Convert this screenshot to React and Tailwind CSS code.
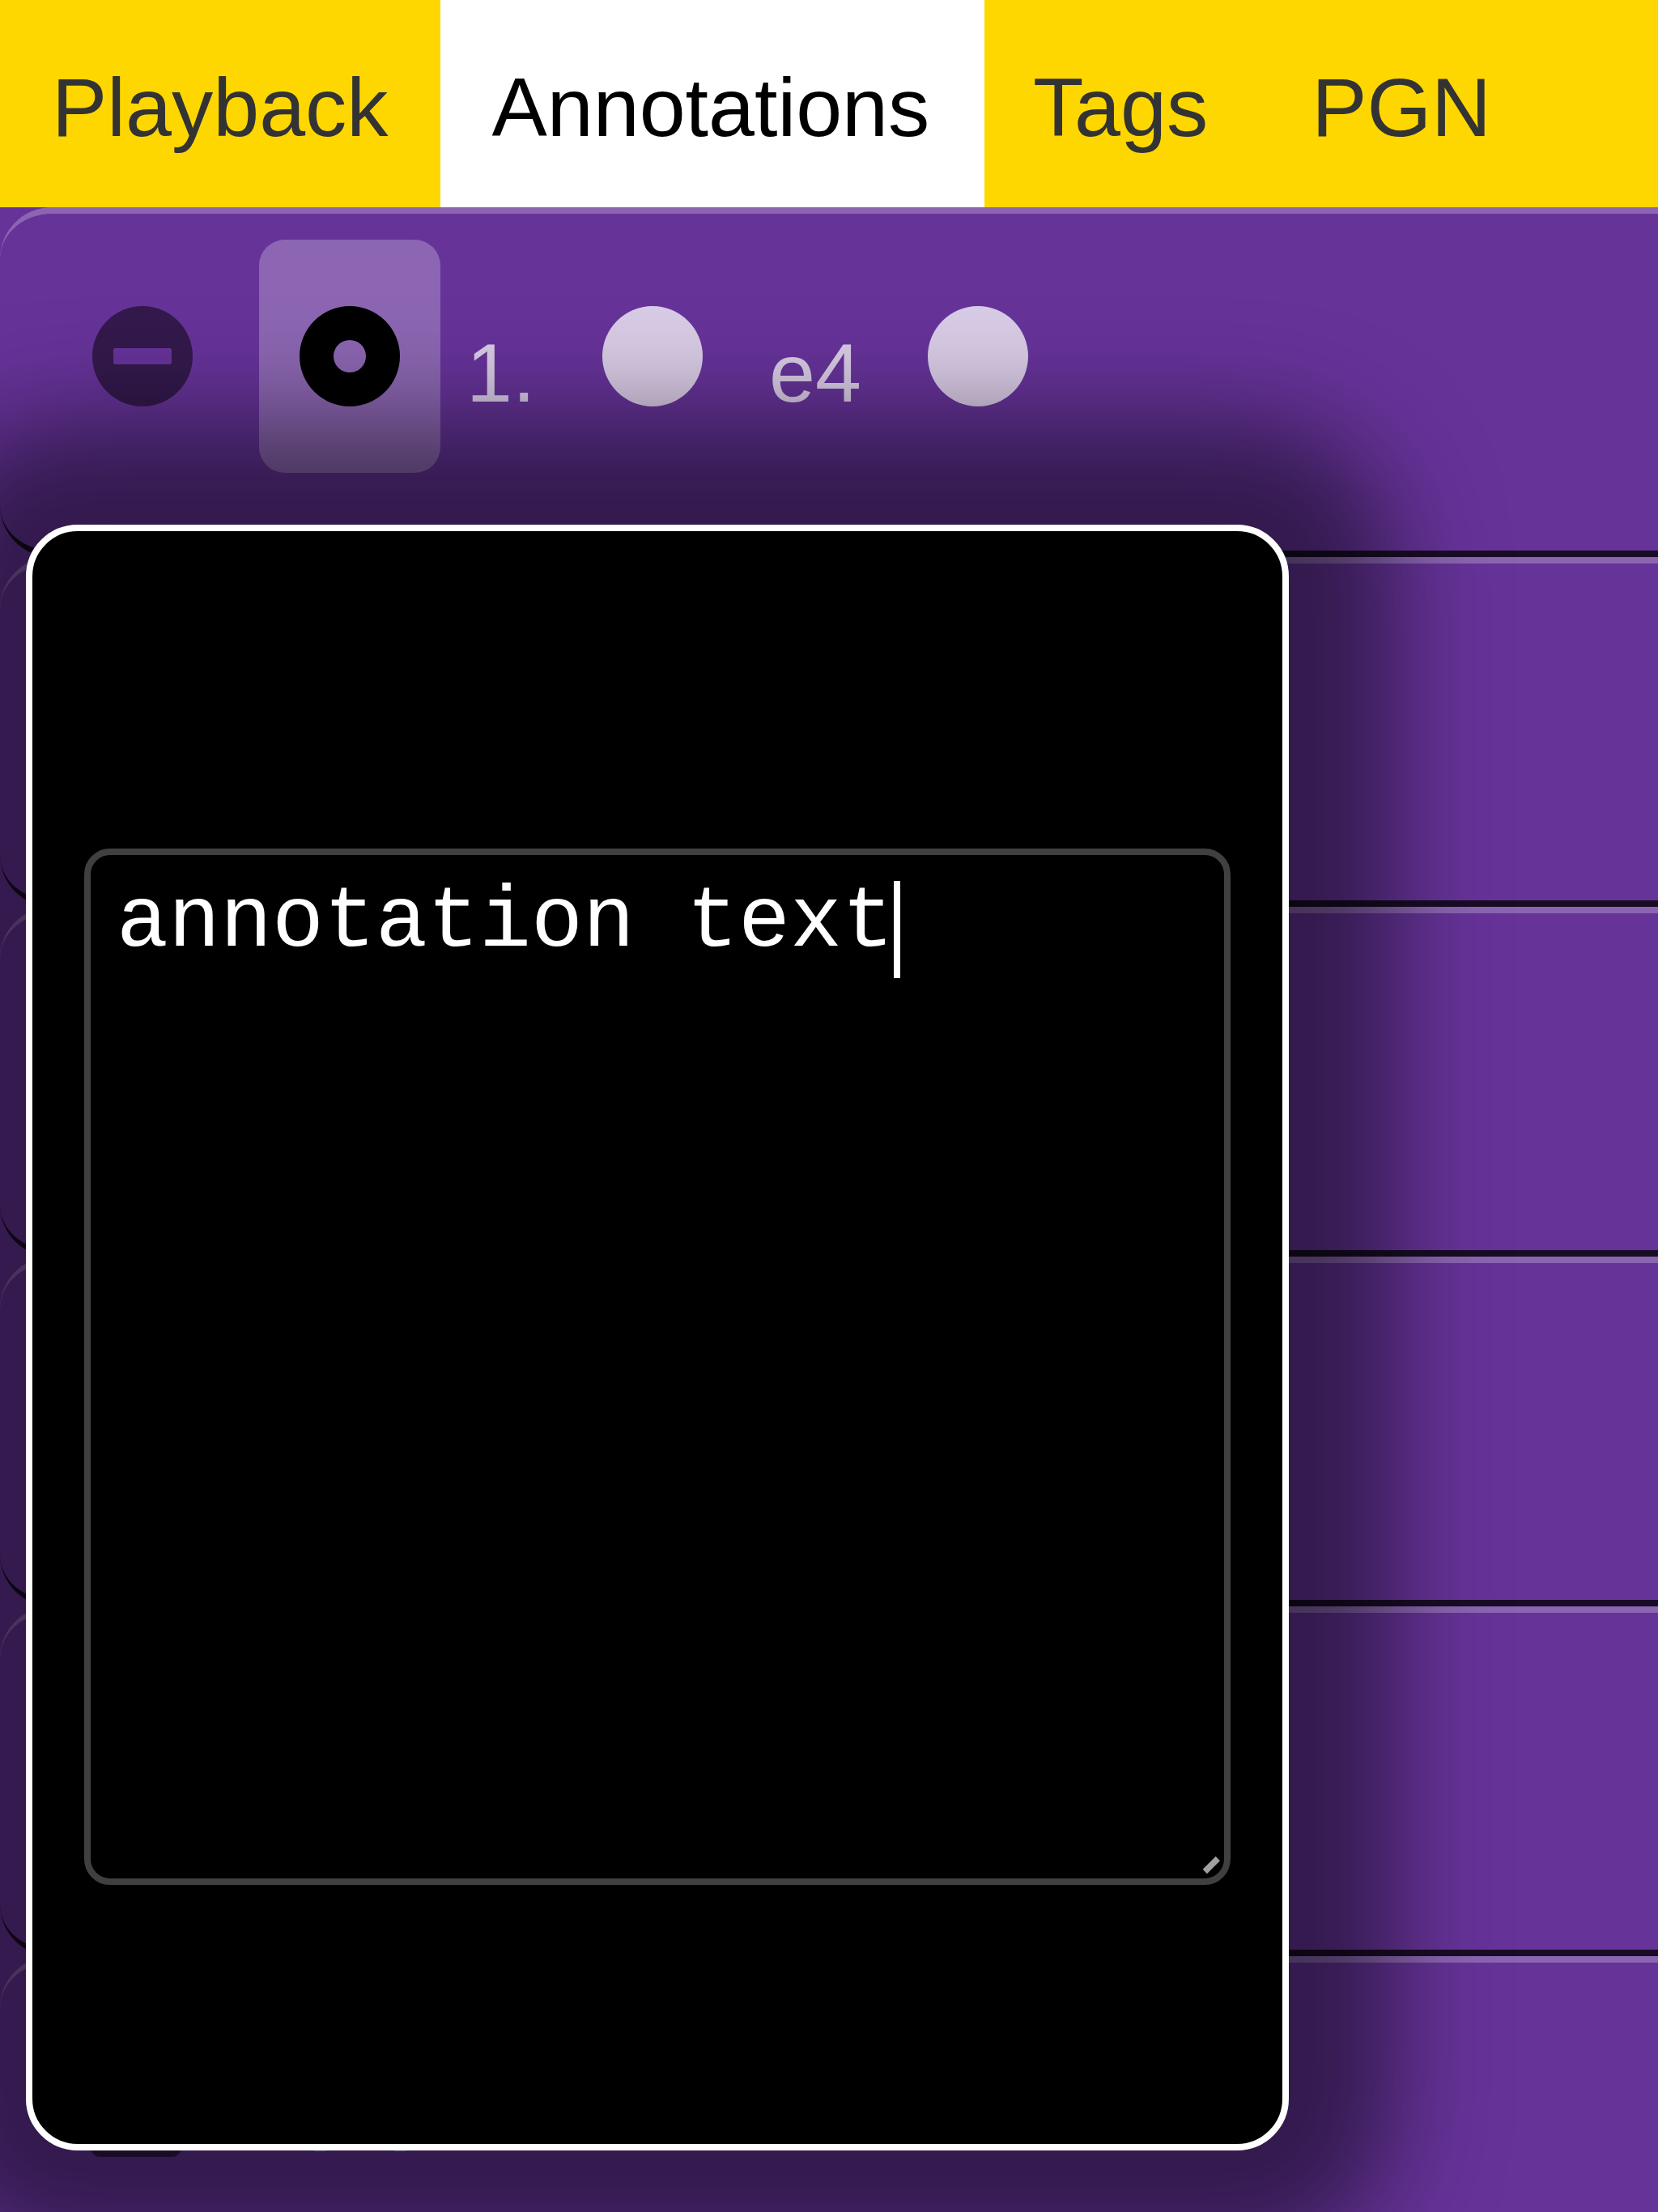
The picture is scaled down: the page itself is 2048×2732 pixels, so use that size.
const TABS = ["Playback", "Annotations", "Tags", "PGN"];

function Tab({ label, active }) {
  return (
    <div
      className={
        active
          ? "-mr-[4.2px] ml-[0.6px] h-[256px] w-[672px] bg-white pt-[74px] pl-[63.4px] text-black"
          : "h-[256px] px-16 pt-[74px] text-[#333333]"
      }
    >
      {label}
    </div>
  );
}

function IconButton({ selected, className, children }) {
  return (
    <div
      className={
        (selected ? "bg-white/25 " : "") +
        "flex h-[288px] w-[224px] shrink-0 items-center justify-center rounded-[32px] " +
        className
      }
    >
      <svg viewBox="0 0 124 124" className="size-[124px]" fill="currentColor">
        {children}
      </svg>
    </div>
  );
}

function Row({ children }) {
  return (
    <div className="flex h-[432px] w-[2400px] shrink-0 items-start gap-8 rounded-[64px] border-y-8 border-t-white/25 border-b-black/75 px-16 pt-8">
      {children}
    </div>
  );
}

function Dot() {
  return <circle cx="62" cy="62" r="62" />;
}

export default function App() {
  return (
    <div className="relative flex h-[2732px] w-[2048px] flex-col overflow-hidden bg-[#663399] font-['Liberation_Sans',Arial,sans-serif] text-[102.4px] leading-[118px]">
      <div className="relative z-10 flex h-[256px] shrink-0 bg-[#ffd700]">
        {TABS.map((t) => (
          <Tab key={t} label={t} active={t === "Annotations"} />
        ))}
      </div>

      <Row>
        <IconButton className="text-black/50">
          <path
            fillRule="evenodd"
            d="M62 0a62 62 0 1 1 0 124a62 62 0 1 1 0-124zM28.500 52a2.500 2.500 0 0 0-2.500 2.500v15a2.500 2.500 0 0 0 2.500 2.500h67a2.500 2.500 0 0 0 2.500-2.500v-15a2.500 2.500 0 0 0-2.500-2.500z"
          />
        </IconButton>
        <IconButton selected className="text-black">
          <path
            fillRule="evenodd"
            d="M62 0a62 62 0 1 1 0 124a62 62 0 1 1 0-124zM62 42a20 20 0 1 0 0 40a20 20 0 1 0 0-40z"
          />
        </IconButton>
        <span className="mt-[106px] w-[86px] text-white/75">1.</span>
        <IconButton className="text-white/75">
          <Dot />
        </IconButton>
        <span className="mt-[106px] text-white/75">e4</span>
        <IconButton className="text-white/75">
          <Dot />
        </IconButton>
      </Row>
      <Row />
      <Row />
      <Row />
      <Row />
      <Row>
        <div className="mt-[128px] ml-[48px] h-[80px] w-[112px] rounded-[12px] bg-black/50" />
        <div className="mt-[200px] ml-[132px] h-px w-[15px] bg-white/40" />
        <div className="mt-[200px] ml-[52px] h-px w-[15px] bg-white/40" />
      </Row>

      <div className="absolute top-[648px] left-[32px] flex h-[2008px] w-[1560px] items-center justify-center rounded-[64px] border-8 border-white bg-black pt-[72px] shadow-[0_0_128px_128px_rgba(0,0,0,0.5)]">
        <div className="relative flex h-[1280px] w-[1416px] items-start rounded-[32px] border-8 border-[#404040] p-8 font-['Liberation_Mono',monospace] text-[106.667px] leading-[120px] text-white">
          <span className="-mt-2 whitespace-pre">annotation text</span>
          <span className="h-[120px] w-2 bg-white" />
          <svg viewBox="0 0 24 24" className="absolute right-1 bottom-1 size-6" stroke="#a0a0a0" strokeWidth="7.5">
            <path d="M4.300 19.500L20.300 3.500" />
          </svg>
        </div>
      </div>
    </div>
  );
}
